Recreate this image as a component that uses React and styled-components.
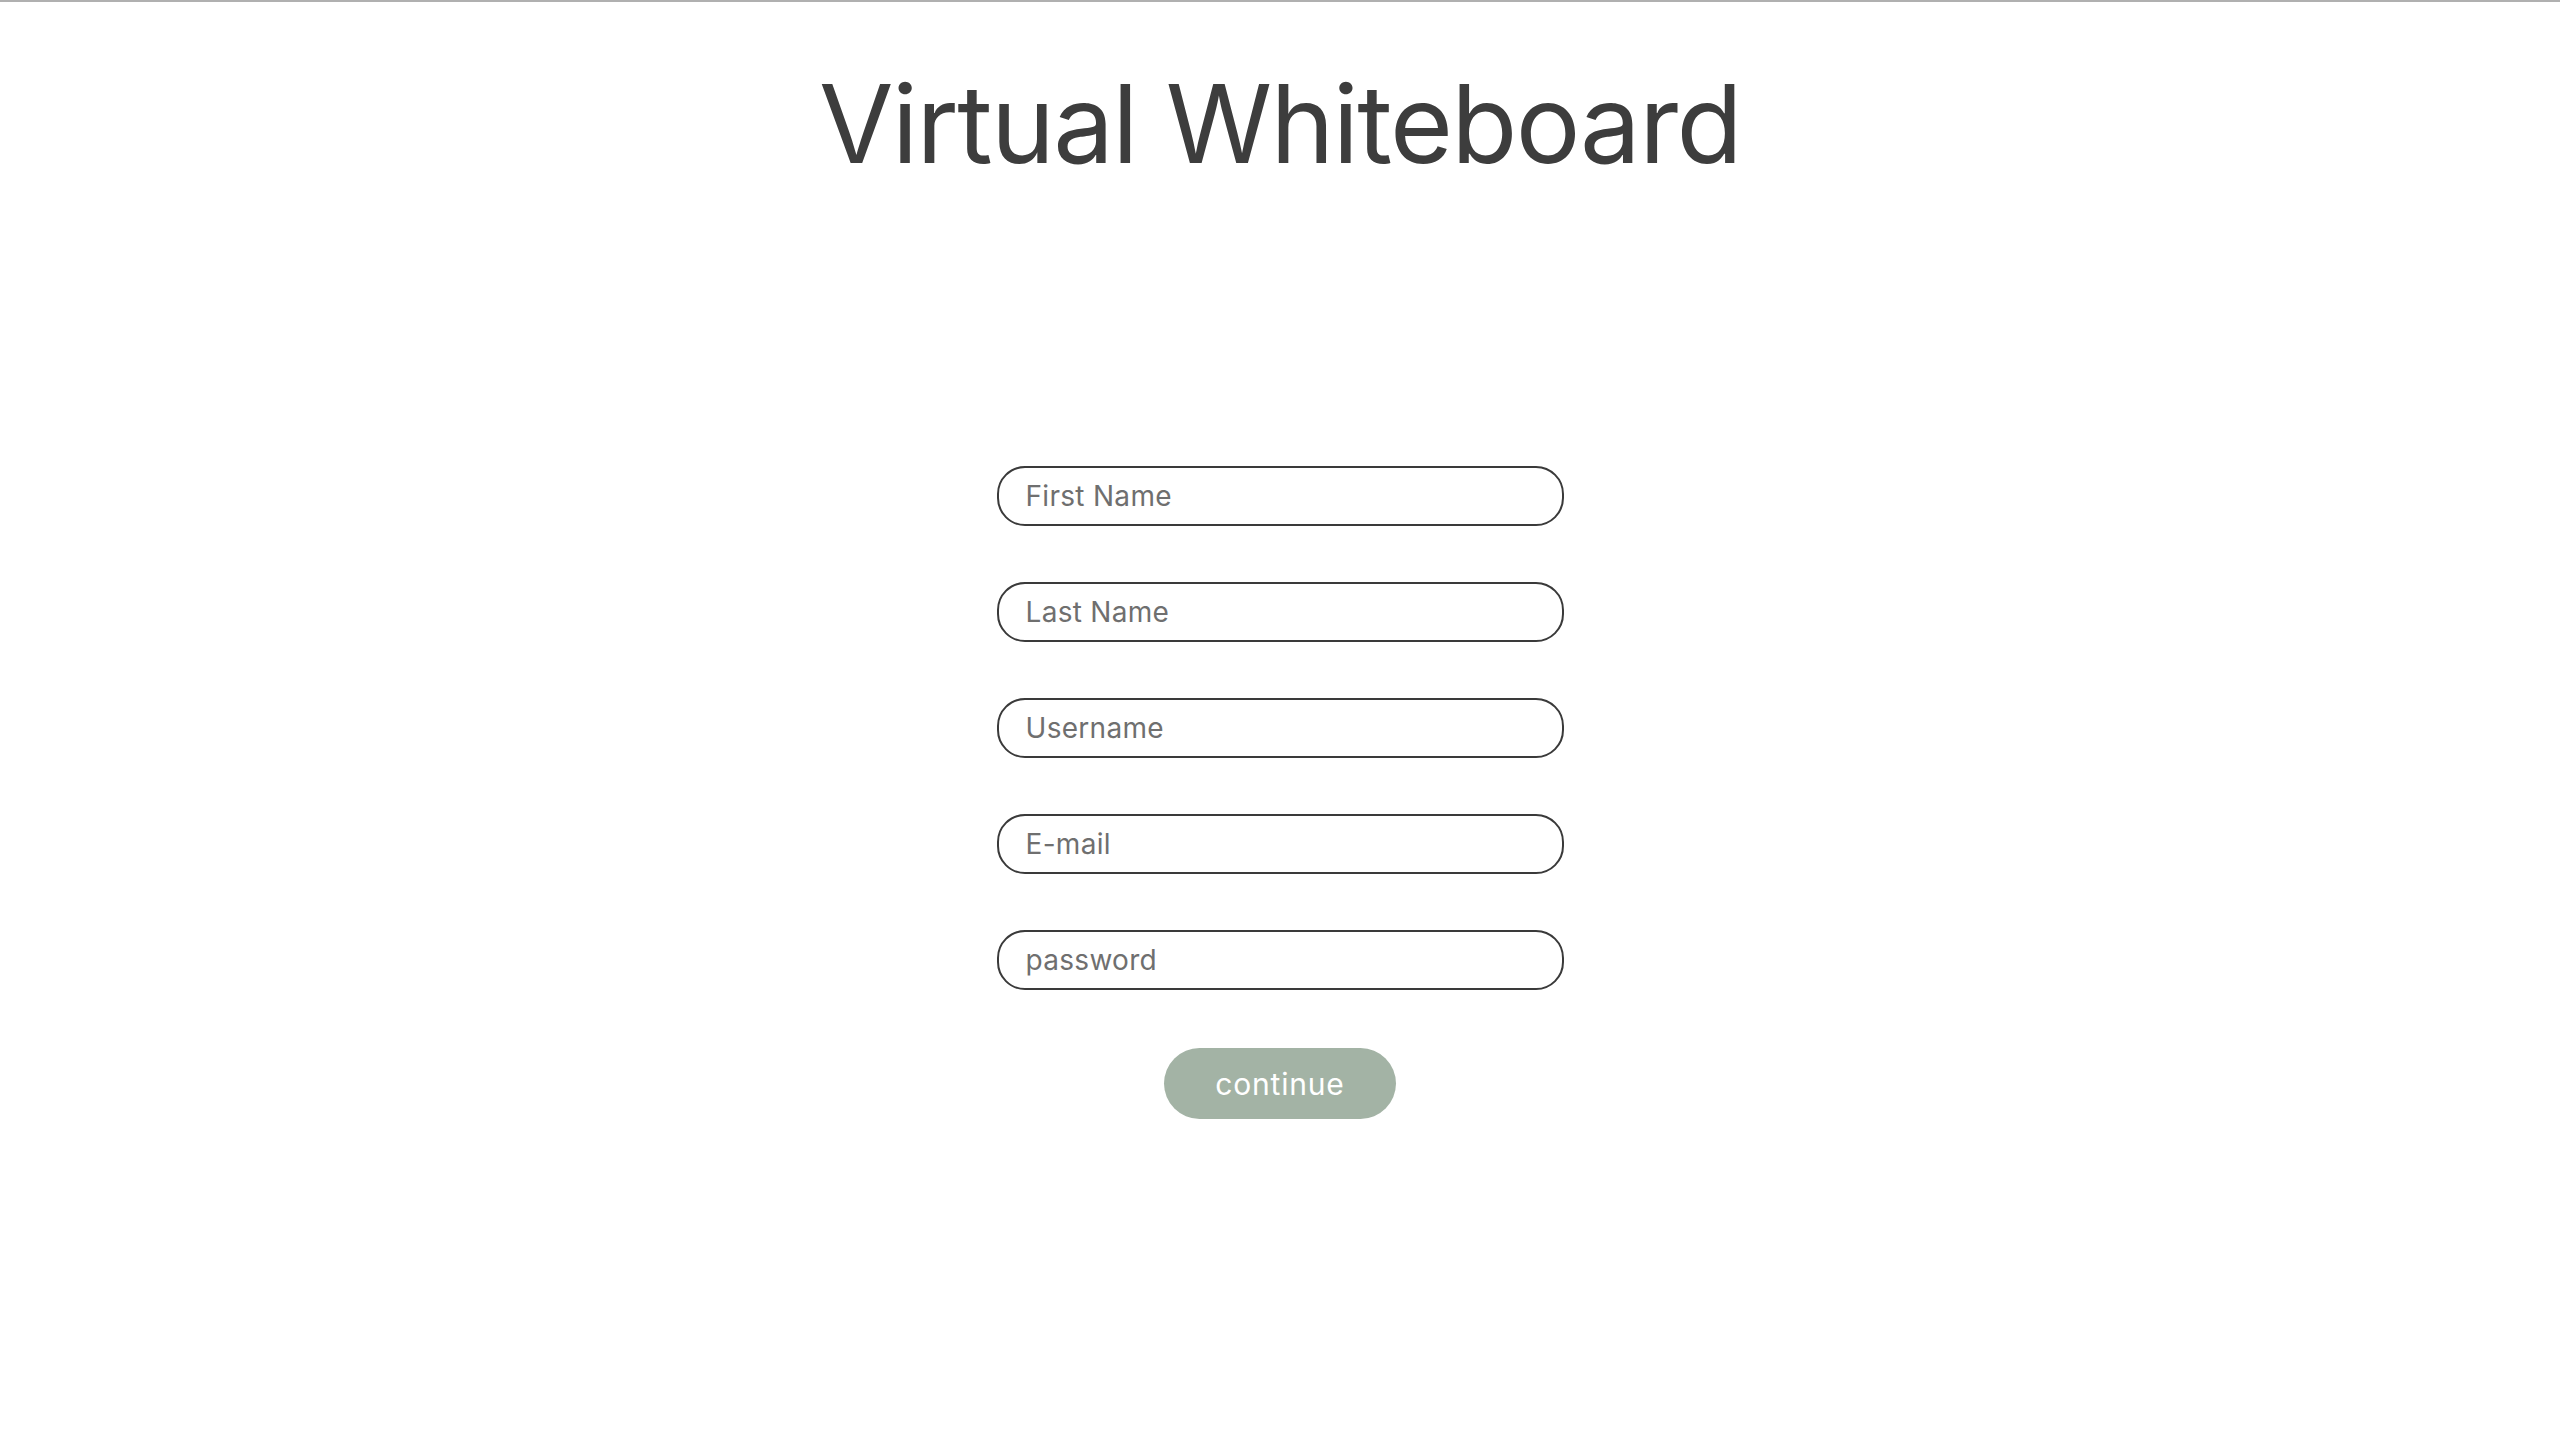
import React from "react";
import styled, { createGlobalStyle } from "styled-components";

const Global = createGlobalStyle`
  html, body { margin: 0; padding: 0; background: #ffffff; }
  body { font-family: Inter, "Noto Sans", sans-serif; }
  * { box-sizing: border-box; }
`;

const Page = styled.div`
  min-height: 1444px;
  border-top: 2px solid #b0b0b0;
  display: flex;
  flex-direction: column;
  align-items: center;
`;

const Title = styled.h1`
  margin: 68px 0 0;
  font-family: Inter, "Noto Sans", sans-serif;
  font-weight: 400;
  font-size: 108px;
  line-height: 1;
  color: #3d3d3d;
  letter-spacing: -1.6px;
`;

const Form = styled.form`
  margin-top: 288px;
  display: flex;
  flex-direction: column;
  align-items: center;
  gap: 56px;
`;

const Field = styled.input`
  width: 567px;
  height: 60px;
  border: 2px solid #3a3a3a;
  border-radius: 28px;
  padding: 0 0 0 27px;
  font-family: Inter, "Noto Sans", sans-serif;
  font-size: 28px;
  letter-spacing: 0.3px;
  color: #333;
  background: #fff;
  outline: none;
  &::placeholder { color: #6f6f6f; }
`;

const Button = styled.button`
  margin-top: 2px;
  width: 232px;
  height: 71px;
  border: none;
  border-radius: 36px;
  background: #a3b3a5;
  color: #ffffff;
  font-family: Inter, "Noto Sans", sans-serif;
  font-size: 30px;
  letter-spacing: 0.8px;
  cursor: pointer;
`;

const fields = [
  { name: "firstName", type: "text", placeholder: "First Name" },
  { name: "lastName", type: "text", placeholder: "Last Name" },
  { name: "username", type: "text", placeholder: "Username" },
  { name: "email", type: "email", placeholder: "E-mail" },
  { name: "password", type: "password", placeholder: "password" },
];

export default function App() {
  return (
    <>
      <Global />
      <Page>
        <Title>Virtual Whiteboard</Title>
        <Form onSubmit={(e) => e.preventDefault()}>
          {fields.map((f) => (
            <Field key={f.name} name={f.name} type={f.type} placeholder={f.placeholder} />
          ))}
          <Button type="submit">continue</Button>
        </Form>
      </Page>
    </>
  );
}
